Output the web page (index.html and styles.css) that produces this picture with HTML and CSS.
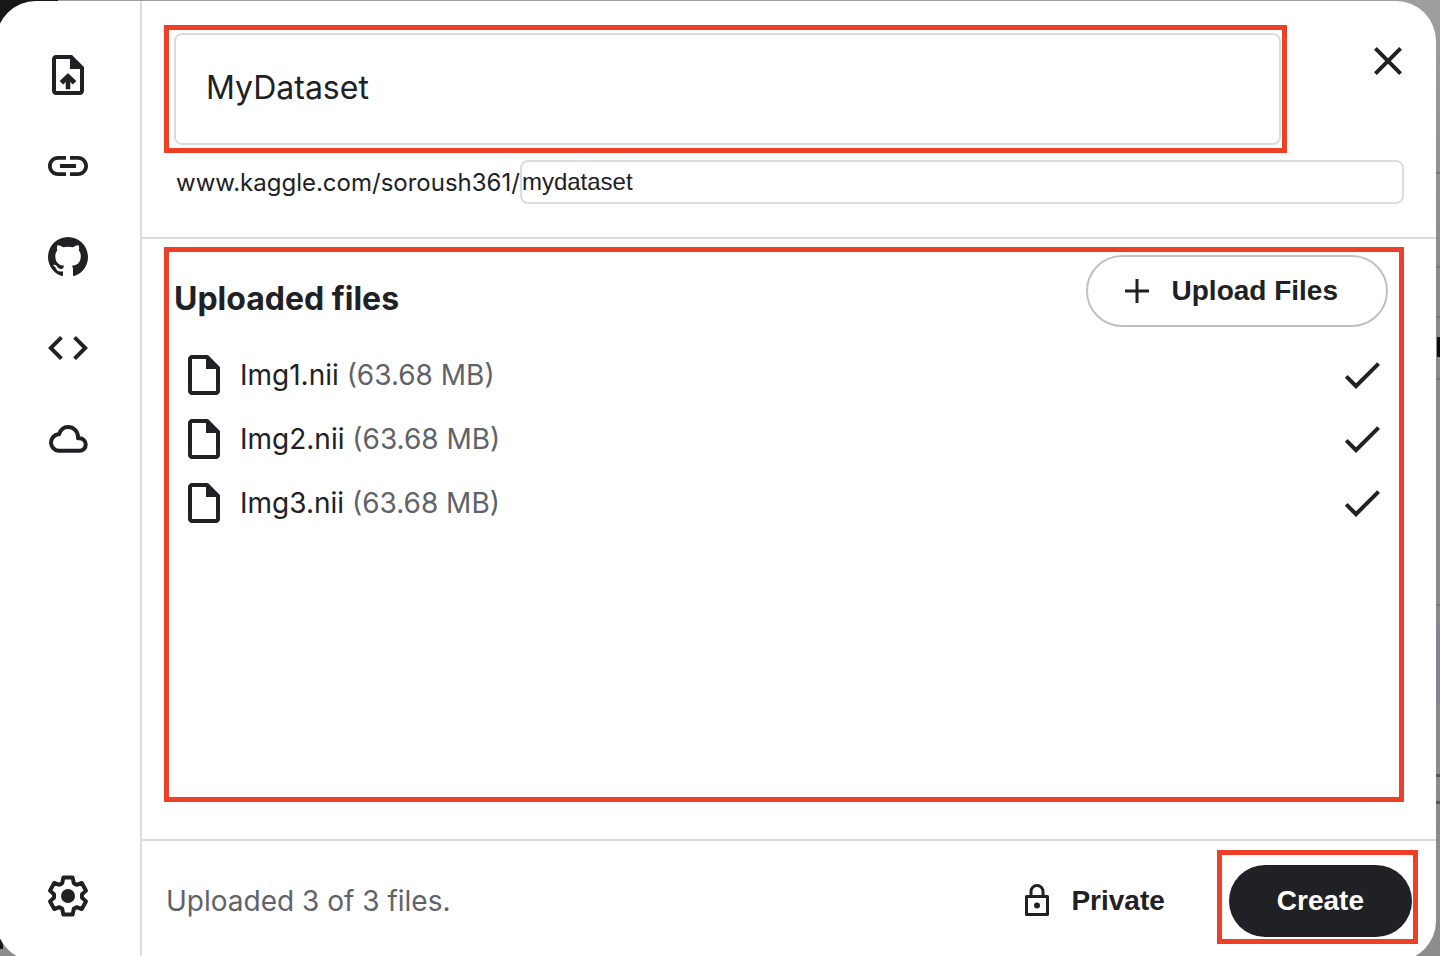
FILE: index.html
```html
<!DOCTYPE html>
<html lang="en">
<head>
<meta charset="utf-8">
<meta name="viewport" content="width=device-width, initial-scale=1">
<title>Create dataset</title>
<link rel="stylesheet" href="styles.css">
</head>
<body>
<div class="dialog" role="dialog" aria-label="Create dataset">
  <nav class="sidebar" aria-label="Upload source">
    <button class="icon-button" aria-label="File"><svg class="icon" viewBox="0 0 24 24"><path fill-rule="evenodd" d="M14 2H6c-1.100 0-2 .9-2 2v16c0 1.100.9 2 2 2h12c1.100 0 2-.9 2-2V8l-6-6zM6 20V4h7v5h5v11H6z"/><path d="M8 15l1.600 1.600L11 15.200V19h2v-3.800l1.400 1.400L16 15 12 11.200z" stroke="currentColor" stroke-width=".3"/></svg></button>
    <button class="icon-button" aria-label="Link"><svg class="icon" viewBox="0 0 24 24"><path d="M3.900 12c0-1.710 1.390-3.100 3.100-3.100h4V7H7c-2.760 0-5 2.240-5 5s2.240 5 5 5h4v-1.900H7c-1.710 0-3.100-1.390-3.100-3.100zM8 13h8v-2H8v2zm9-6h-4v1.900h4c1.710 0 3.100 1.390 3.100 3.100s-1.390 3.100-3.100 3.100h-4V17h4c2.760 0 5-2.240 5-5s-2.240-5-5-5z"/></svg></button>
    <button class="icon-button" aria-label="GitHub"><svg class="icon icon-mark" viewBox="0 0 16 16"><path d="M8 0C3.580 0 0 3.580 0 8c0 3.540 2.290 6.530 5.470 7.590.4.070.55-.17.55-.38 0-.19-.01-.82-.01-1.490-2.010.37-2.530-.49-2.690-.94-.09-.23-.48-.94-.82-1.130-.28-.15-.68-.52-.01-.53.63-.01 1.080.58 1.230.82.72 1.210 1.870.87 2.330.66.07-.52.28-.87.51-1.070-1.780-.2-3.640-.89-3.640-3.950 0-.87.31-1.590.82-2.150-.08-.2-.36-1.020.08-2.120 0 0 .67-.21 2.200.82.64-.18 1.320-.27 2-.27s1.360.09 2 .27c1.530-1.040 2.200-.82 2.200-.82.44 1.100.16 1.920.08 2.120.51.56.82 1.270.82 2.150 0 3.070-1.870 3.750-3.650 3.950.29.25.54.73.54 1.480 0 1.070-.01 1.930-.01 2.200 0 .21.15.46.55.38A8.010 8.010 0 0 0 16 8c0-4.420-3.580-8-8-8z"/></svg></button>
    <button class="icon-button" aria-label="Notebook output"><svg class="icon" viewBox="0 0 24 24"><path d="M9.400 16.600L4.800 12l4.600-4.600L8 6l-6 6 6 6 1.400-1.400zm5.200 0l4.600-4.600-4.600-4.600L16 6l6 6-6 6-1.400-1.400z"/></svg></button>
    <button class="icon-button" aria-label="Cloud storage"><svg class="icon icon-cloud" viewBox="0 0 40 40"><path d="M10.500 31.800A8.300 8.300 0 0 1 10.300 15.300H11C12.500 11 15.900 8 20 8c5.500 0 10 4.300 10 10v1.300h1.500a6.250 6.250 0 0 1 0 12.500z" fill="none" stroke="currentColor" stroke-width="4" stroke-linejoin="round"/></svg></button>
    <button class="icon-button settings" aria-label="Settings"><svg class="icon" viewBox="-24 -24 48 48"><path d="M-4.600-18.500H4.600L5.800-12.800L8.500-11.200L13.800-13L18-5.400L14-1.700V1.700L18 5.400L13.800 13L8.500 11.200L5.800 12.800L4.600 18.500H-4.600L-5.800 12.800L-8.500 11.200L-13.800 13L-18 5.400L-14 1.700V-1.700L-18-5.400L-13.800-13L-8.500-11.200L-5.800-12.800Z" fill="none" stroke="currentColor" stroke-width="4" stroke-linejoin="round"/><circle r="7"/></svg></button>
  </nav>
  <main class="content">
    <header class="header">
      <div class="name-row">
        <div class="name-field highlight">
          <input class="name-input" type="text" aria-label="Dataset title" value="MyDataset">
        </div>
        <button class="close" aria-label="Close"><svg class="icon" viewBox="0 0 24 24"><path d="M19 6.410L17.590 5 12 10.590 6.410 5 5 6.410 10.590 12 5 17.590 6.410 19 12 13.410 17.590 19 19 17.590 13.410 12z"/></svg></button>
      </div>
      <div class="url-row">
        <label for="slug">www.kaggle.com/soroush361/</label>
        <input class="slug-input" id="slug" type="text" value="mydataset">
      </div>
    </header>
    <section class="files">
      <div class="files-panel highlight">
        <div class="files-head">
          <h2 class="title">Uploaded files</h2>
          <button class="button outlined"><svg class="icon icon-plus" viewBox="0 0 26 26"><path d="M13 1v24M1 13h24" fill="none" stroke="currentColor" stroke-width="3"/></svg>Upload Files</button>
        </div>
        <ul class="file-list">
          <li class="file"><svg class="icon" viewBox="0 0 24 24"><path fill-rule="evenodd" d="M14 2H6c-1.100 0-2 .9-2 2v16c0 1.100.9 2 2 2h12c1.100 0 2-.9 2-2V8l-6-6zM6 20V4h7v5h5v11H6z"/></svg><span class="file-name">Img1.nii <span class="size">(63.68 MB)</span></span><svg class="icon" viewBox="0 0 24 24"><path d="M9 16.170L4.830 12l-1.420 1.410L9 19 21 7l-1.410-1.410z"/></svg></li>
          <li class="file"><svg class="icon" viewBox="0 0 24 24"><path fill-rule="evenodd" d="M14 2H6c-1.100 0-2 .9-2 2v16c0 1.100.9 2 2 2h12c1.100 0 2-.9 2-2V8l-6-6zM6 20V4h7v5h5v11H6z"/></svg><span class="file-name">Img2.nii <span class="size">(63.68 MB)</span></span><svg class="icon" viewBox="0 0 24 24"><path d="M9 16.170L4.830 12l-1.420 1.410L9 19 21 7l-1.410-1.410z"/></svg></li>
          <li class="file"><svg class="icon" viewBox="0 0 24 24"><path fill-rule="evenodd" d="M14 2H6c-1.100 0-2 .9-2 2v16c0 1.100.9 2 2 2h12c1.100 0 2-.9 2-2V8l-6-6zM6 20V4h7v5h5v11H6z"/></svg><span class="file-name">Img3.nii <span class="size">(63.68 MB)</span></span><svg class="icon" viewBox="0 0 24 24"><path d="M9 16.170L4.830 12l-1.420 1.410L9 19 21 7l-1.410-1.410z"/></svg></li>
        </ul>
      </div>
    </section>
    <footer class="footer">
      <p class="status">Uploaded 3 of 3 files.</p>
      <button class="button plain"><svg class="icon icon-lock" viewBox="0 0 36 36"><path d="M7.500 13.500h21v18h-21zM12 13V8.500a6 6 0 0 1 12 0V13" fill="none" stroke="currentColor" stroke-width="3" stroke-linejoin="round"/><circle cx="18" cy="22.500" r="3"/></svg>Private</button>
      <div class="create-box highlight"><button class="button filled">Create</button></div>
    </footer>
  </main>
</div>
</body>
</html>
```
FILE: styles.css
```css
* { box-sizing: border-box; }

body {
  display: flex;
  height: 100vh;
  margin: 0;
  overflow: hidden;
  font-family: Inter, "Liberation Sans", sans-serif;
  color: #202124;
  background:
    linear-gradient(#17181a, #17181a) 0 0 / 58px 50px no-repeat,
    linear-gradient(#17181a, #17181a) 0 938px / 3px 11px no-repeat,
    linear-gradient(#0c0c0c, #0c0c0c) 100% 337px / 3px 20px no-repeat,
    linear-gradient(#80868f, #80868f) 100% 625px / 10px 80px no-repeat,
    linear-gradient(#777, #777) 100% 172px / 10px 2px no-repeat,
    linear-gradient(#777, #777) 100% 266px / 10px 2px no-repeat,
    linear-gradient(#777, #777) 100% 316px / 10px 2px no-repeat,
    linear-gradient(#777, #777) 100% 378px / 10px 2px no-repeat,
    linear-gradient(#777, #777) 100% 604px / 10px 2px no-repeat,
    linear-gradient(#555, #555) 100% 774px / 10px 3px no-repeat,
    linear-gradient(#555, #555) 100% 801px / 10px 3px no-repeat,
    linear-gradient(#9e9e9e, #8a8a88 30%, #8c8c8a);
}

button, input { font: inherit; color: inherit; }
button { cursor: pointer; border: 0; padding: 0; background: none; }

.icon { display: block; flex: none; width: 48px; height: 48px; fill: currentColor; }
.icon-mark, .icon-cloud { width: 40px; height: 40px; }
.icon-plus { width: 26px; height: 26px; }
.icon-lock { width: 36px; height: 36px; }

.dialog {
  display: flex;
  flex: 1;
  min-width: 0;
  margin: 1px 4px -5px -4px;
  overflow: hidden;
  border-radius: 40px;
  background: #fff;
}

.sidebar {
  display: flex;
  flex-direction: column;
  align-items: center;
  gap: 43px;
  width: 146px;
  padding: 50px 0 41px;
  border-right: 2px solid #dadce0;
}
.icon-button {
  display: grid;
  place-items: center;
  width: 48px;
  height: 48px;
}
.settings { margin-top: auto; }

.content { display: flex; flex: 1; flex-direction: column; min-width: 0; }

/* Red callout frames drawn over the part they surround */
.highlight { position: relative; }
.highlight::after {
  content: "";
  position: absolute;
  inset: 0;
  border: 5px solid #ee4026;
  pointer-events: none;
}

.header {
  padding: 32px 32px 33px;
  border-bottom: 2px solid #dadce0;
}
.name-row {
  display: flex;
  align-items: flex-start;
  gap: 83px;
  padding-right: -8px;
}
.name-field { flex: 1; }
.name-field.highlight::after { inset: -8px -6px -8px -10px; }
.name-input {
  display: block;
  width: 100%;
  height: 112px;
  padding: 0 30px 3px;
  border: 2px solid #dadce0;
  border-radius: 8px;
  font-size: 32px;
  background: #fff;
}
.close { margin: 4px -8px 0 0; }
.url-row { display: flex; align-items: center; margin-top: 15px; font-size: 24px; }
.url-row label { padding-left: 2px; }
.slug-input {
  flex: 1;
  min-width: 0;
  height: 44px;
  padding: 0;
  border: 2px solid #dadce0;
  border-radius: 8px;
  font-family: "Liberation Sans", Arial, sans-serif;
  background: #fff;
}

.files {
  display: flex;
  flex: 1;
  padding: 8px 32px 37px 22px;
}
.files-panel {
  flex: 1;
  padding: 8px 16px 0 10px;
}
.files-head { display: flex; align-items: center; justify-content: space-between; }
.title { margin: 16px 0 0; font-size: 32px; line-height: 40px; font-weight: 700; }

.button {
  display: flex;
  align-items: center;
  justify-content: center;
  height: 72px;
  border-radius: 36px;
  font: 700 28px/32px "Liberation Sans", Arial, sans-serif;
}
.outlined { gap: 22px; padding: 0 48px 0 36px; border: 2px solid #bdc1c6; }
.plain { gap: 16px; }
.filled { padding: 0 48px; color: #fff; background: #202124; }

.file-list { margin: 16px 0 0; padding: 0; list-style: none; }
.file {
  display: flex;
  align-items: center;
  gap: 12px;
  height: 64px;
  padding: 0 2px 0 6px;
  font-size: 28px;
}
.file-name { flex: 1; }
.size { color: #5f6368; }

.footer {
  display: flex;
  align-items: center;
  height: 122px;
  padding: 0 24px;
  border-top: 2px solid #dadce0;
}
.status { flex: 1; margin: 0; font-size: 28px; color: #5f6368; }
.create-box { margin-left: 64px; }
.create-box.highlight::after { inset: -15px -6px -7px -12px; }
```
